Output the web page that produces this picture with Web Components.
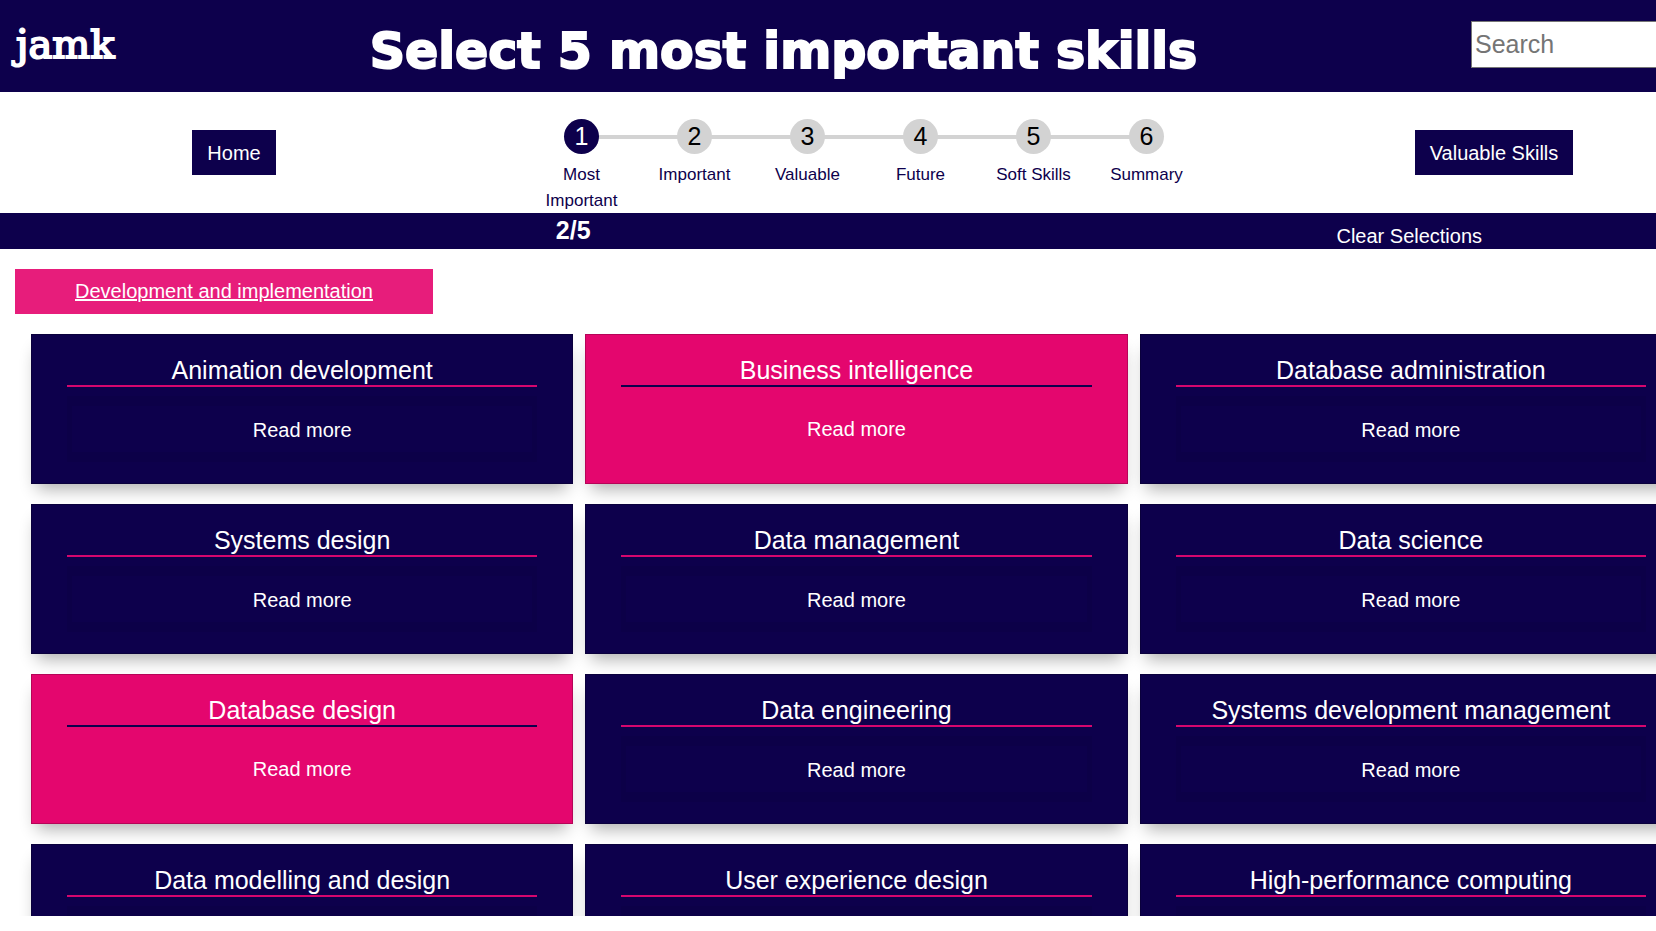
<!DOCTYPE html>
<html lang="en">
<head>
<meta charset="utf-8">
<title>Select 5 most important skills</title>
<style>
  body { margin: 0; background: #fff; font-family: "Liberation Sans", Arial, sans-serif; font-size: 20px;
    --navy: #0d004c; --pink: #e4066e; --track: #d3d3d3; }
</style>
</head>
<body>
<skill-app>
  <app-header slot="header" heading="Select 5 most important skills"></app-header>
  <nav-bar slot="nav" back="Home" next="Valuable Skills">
    <progress-step current number="1">Most Important</progress-step>
    <progress-step number="2">Important</progress-step>
    <progress-step number="3">Valuable</progress-step>
    <progress-step number="4">Future</progress-step>
    <progress-step number="5">Soft Skills</progress-step>
    <progress-step last number="6">Summary</progress-step>
  </nav-bar>
  <selection-bar slot="status">2/5</selection-bar>
  <skill-category>
    <span slot="name">Development and implementation</span>
    <skill-card>Animation development</skill-card>
    <skill-card selected>Business intelligence</skill-card>
    <skill-card>Database administration</skill-card>
    <skill-card>Systems design</skill-card>
    <skill-card>Data management</skill-card>
    <skill-card>Data science</skill-card>
    <skill-card selected>Database design</skill-card>
    <skill-card>Data engineering</skill-card>
    <skill-card>Systems development management</skill-card>
    <skill-card>Data modelling and design</skill-card>
    <skill-card>User experience design</skill-card>
    <skill-card>High-performance computing</skill-card>
  </skill-category>
</skill-app>

<script>
const define = (name, markup) => customElements.define(name, class extends HTMLElement {
  constructor() {
    super();
    this.attachShadow({ mode: "open" }).innerHTML = markup(this);
  }
});

define("skill-app", () => `
  <style>
    :host { display: flex; flex-direction: column; height: calc(100vh - 15px); overflow: hidden; }
    main { flex: 1; min-height: 0; overflow: auto; scrollbar-width: none; }
  </style>
  <slot name="header"></slot><slot name="nav"></slot><slot name="status"></slot>
  <main><slot></slot></main>`);

define("app-header", el => `
  <style>
    :host { display: block; flex: none; background: var(--navy); color: #fff; }
    header { display: grid; grid-template-columns: 96px 1fr 185px; align-items: center; height: 92px; }
    a { padding: 0 0 4px 16px; color: #fff; text-decoration: none; font: 40px/48px "DejaVu Serif", serif;
      -webkit-text-stroke: 2px #fff; }
    h1 { margin: 0; padding: 12px 0 0 0; text-align: center; font: 700 49px/60px "DejaVu Sans", sans-serif;
      -webkit-text-stroke: 2px #fff; white-space: nowrap; }
    input { box-sizing: border-box; width: 300px; height: 47px; margin: 0 0 3px; padding: 0 3px; border: 1px solid #767676;
      font: 25px "Liberation Sans", Arial, sans-serif; }
    input::placeholder { color: #757575; opacity: 1; }
  </style>
  <header>
    <a href="#" aria-label="jamk">jamk</a>
    <h1>${el.getAttribute("heading")}</h1>
    <input type="search" placeholder="Search" aria-label="Search">
  </header>`);

define("nav-bar", el => `
  <style>
    :host { display: block; flex: none; }
    nav { display: grid; grid-template: 121px / 13fr 22fr 13fr; justify-items: center; align-items: center;
      width: calc(100% + 72px); }
    button { height: 45px; padding: 2px 15px 0; border: 0; background: var(--navy); color: #fff; font: inherit; }
    .steps { display: flex; align-self: start; padding-top: 27px; }
  </style>
  <nav>
    <button type="button">${el.getAttribute("back")}</button>
    <div class="steps"><slot></slot></div>
    <button type="button">${el.getAttribute("next")}</button>
  </nav>`);

define("progress-step", el => `
  <style>
    :host { display: flex; flex-direction: column; align-items: center; position: relative; width: 113px; }
    b { display: grid; place-items: center; width: 35px; height: 35px; border-radius: 50%; z-index: 1;
      background: var(--track); color: #000; font-size: 25px; font-weight: 400; }
    :host([current]) b { background: var(--navy); color: #fff; }
    :host(:not([last]))::before { content: ""; position: absolute; left: 50%; top: 16px; width: 100%; height: 4px;
      background: var(--track); }
    span { width: 80px; margin-top: 8px; text-align: center; color: var(--navy); font-size: 17px; line-height: 26px; }
  </style>
  <b>${el.getAttribute("number")}</b><span><slot></slot></span>`);

define("selection-bar", () => `
  <style>
    :host { display: block; flex: none; background: var(--navy); color: #fff; }
    div { display: grid; grid-template-columns: 24fr 11fr; justify-items: center; width: calc(100% + 16px); height: 36px; }
    strong { font-size: 25px; line-height: 34px; }
    button { align-self: end; padding: 0; border: 0; background: none; color: #fff; font: inherit; line-height: 26px; }
  </style>
  <div><strong><slot></slot></strong><button type="button">Clear Selections</button></div>`);

define("skill-category", () => `
  <style>
    :host { display: block; padding-top: 20px; }
    .name { display: block; width: 418px; height: 45px; margin-left: 15px; padding: 0; border: 0;
      background: #e71d7b; color: #fff; font: inherit; text-decoration: underline; }
    section { display: grid; grid-template-columns: repeat(3, 1fr); gap: 20px 12px; width: calc(100% - 5px);
      margin: 20px 0 0 31px; }
  </style>
  <button class="name" type="button"><slot name="name"></slot></button>
  <section><slot></slot></section>`);

define("skill-card", () => `
  <style>
    :host { display: block; box-sizing: border-box; height: 150px; padding: 20px 35px; border: 1px solid rgba(0,0,0,.2);
      background: var(--navy); color: #fff; text-align: center;
      box-shadow: 0 11px 16px -6px rgba(0,0,0,.32); }
    h2 { margin: 0; border-bottom: 2px solid #d6066e; font-size: 25px; font-weight: 400; line-height: 30px; }
    button { display: block; width: 100%; height: 66px; margin-top: 9px; padding: 2px 0 0; border: solid rgba(0,0,0,.05);
      border-width: 10px 5px; background: none; color: #fff; font: inherit; }
    :host([selected]) { background: var(--pink); }
    :host([selected]) h2 { border-color: var(--navy); }
    :host([selected]) button { height: 64px; border-color: transparent; }
  </style>
  <h2><slot></slot></h2>
  <button type="button">Read more</button>`);
</script>
</body>
</html>
